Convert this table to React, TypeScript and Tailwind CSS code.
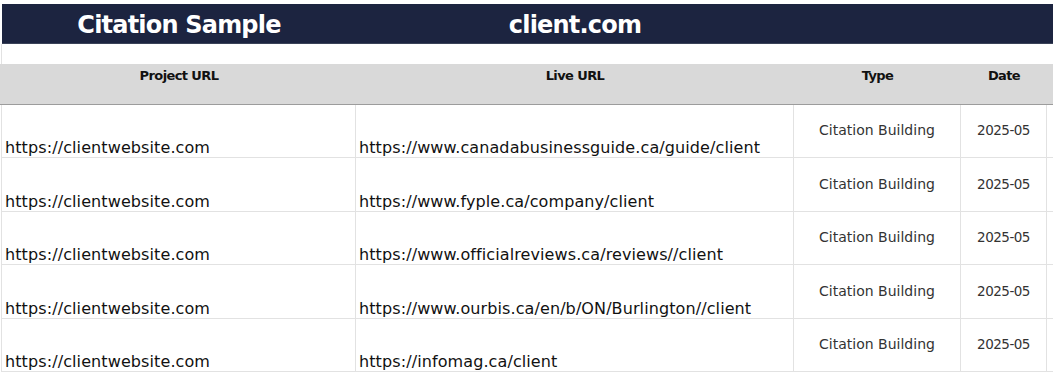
import React from 'react'

const rows = [
  'https://www.canadabusinessguide.ca/guide/client',
  'https://www.fyple.ca/company/client',
  'https://www.officialreviews.ca/reviews//client',
  'https://www.ourbis.ca/en/b/ON/Burlington//client',
  'https://infomag.ca/client',
]

const cols = 'grid grid-cols-[354px_438px_167px_86px_1fr]'

export default function App() {
  return (
    <div className="w-[1053px] h-[377px] overflow-hidden bg-white font-['DejaVu_Sans',sans-serif] pt-[4px]">
      <div className="pl-[2px]">
        <div className={`${cols} h-[40px] bg-[#1c2440] border-b border-[#3a4258] text-white font-bold text-[24px] items-center pt-[3px]`}>
          <div className="text-center tracking-[-0.8px]">Citation Sample</div>
          <div className="text-center tracking-[-0.8px]">client.com</div>
          <div />
          <div />
          <div />
        </div>
      </div>
      <div className="h-[20px] border-l border-[#e2e2e2] ml-[1px]" />
      <div className={`${cols} h-[41px] bg-[#d9d9d9] border-b border-[#9c9c9c] pl-[2px] text-[13px] font-bold text-[#111] tracking-[-0.6px]`}>
        <div className="text-center pt-[2px]">Project URL</div>
        <div className="text-center pt-[2px]">Live URL</div>
        <div className="text-center pt-[2px]">Type</div>
        <div className="text-center pt-[2px]">Date</div>
        <div />
      </div>
      <div className="ml-[1px] border-l border-[#e2e2e2]">
        {rows.map((url, i) => (
          <div key={i} className={`${cols} ${i % 2 === 0 ? 'h-[53px]' : 'h-[54px]'} border-b border-[#e2e2e2]`}>
            <div className="border-r border-[#e2e2e2] flex items-end pl-[3px] text-[16px] leading-[18px] text-[#111] tracking-[0.1px]">
              https://clientwebsite.com
            </div>
            <div className="border-r border-[#e2e2e2] flex items-end pl-[3px] text-[16px] leading-[18px] text-[#111] tracking-[0.1px]">
              {url}
            </div>
            <div className="border-r border-[#e2e2e2] flex items-center justify-center pb-[1px] text-[14px] text-[#333]">
              Citation Building
            </div>
            <div className="border-r border-[#e2e2e2] flex items-center justify-center pb-[1px] text-[13.5px] text-[#333] tracking-[-0.5px]">
              2025-05
            </div>
            <div />
          </div>
        ))}
      </div>
    </div>
  )
}
